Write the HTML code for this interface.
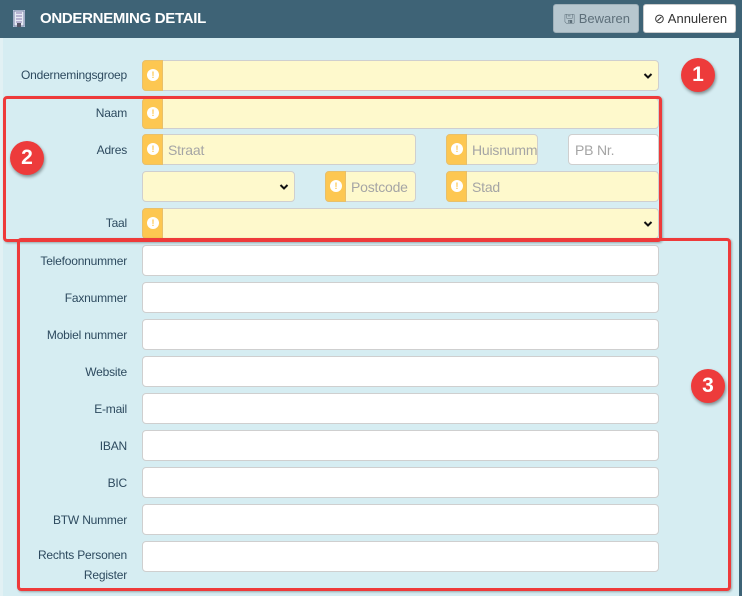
<!DOCTYPE html>
<html><head><meta charset="utf-8"><style>
*{box-sizing:border-box;margin:0;padding:0}
body{width:742px;height:596px;overflow:hidden;background:#d6edf2;font-family:"Liberation Sans",sans-serif;position:relative}
.hdr{position:absolute;left:0;top:0;width:742px;height:38px;background:#3e6376}
.title{position:absolute;left:40px;top:10px;color:#fff;font-weight:bold;font-size:15px;letter-spacing:-0.3px}
.btn{position:absolute;top:4px;height:29px;border-radius:3px;font-size:13px;line-height:27px;padding-left:10px}
.rs{position:absolute;right:0;top:38px;width:3px;height:558px;background:#3e6376}
.ls{position:absolute;left:0;top:38px;width:3px;height:558px;background:#e2f1f4}
.lbl{position:absolute;right:615px;font-size:12px;color:#2d4a5f;text-align:right;line-height:15px;letter-spacing:-0.2px}
.in{position:absolute;height:31px;border:1px solid #cfcfcf;border-radius:4px;background:#fff}
.y{background:#fef9cc}
.ic{position:absolute;height:31px;width:21px;background:#fdc751;border-radius:4px 0 0 4px;border:1px solid #e8c06a}
.ic::after{content:"!";position:absolute;left:4px;top:8px;width:12px;height:12px;border-radius:50%;background:#fff;color:#fdc751;font-size:9px;font-weight:bold;text-align:center;line-height:12px}
.ph{position:absolute;font-size:14px;color:#a5a5a5;top:7px;left:6px;letter-spacing:-0.2px}
.chev{position:absolute;right:5px;top:11px}
.box{position:absolute;border:3px solid #ee3a3a;border-radius:4px;box-shadow:1px 1px 2px rgba(0,0,0,.3)}
.badge{position:absolute;width:34px;height:34px;border-radius:50%;background:#ed3b3b;color:#fff;font-weight:bold;font-size:21px;text-align:center;line-height:34px;box-shadow:1px 2px 3px rgba(0,0,0,.4)}
</style></head><body>
<div class="hdr"></div>
<svg style="position:absolute;left:13px;top:10px" width="12" height="17"><rect x="0" y="0" width="12" height="17" fill="#c9d6e8"/><rect x="1" y="1" width="10" height="15" fill="#e6eaf5" stroke="#7a86a8"/><path d="M3 3h6M3 6h6M3 9h6M3 12h6" stroke="#8a7fb0"/><rect x="4" y="13" width="4" height="4" fill="#556"/></svg>
<div class="title">ONDERNEMING DETAIL</div>
<div class="btn" style="left:553px;width:86px;background:#b7c7cf;border:1px solid #9fb0b9;color:#5d6f7a">🖫 Bewaren</div>
<div class="btn" style="left:643px;width:93px;background:#fff;border:1px solid #ccc;color:#333">⊘ Annuleren</div>
<div class="ls"></div><div class="rs"></div>

<div class="lbl" style="top:68px">Ondernemingsgroep</div>
<div class="in y" style="left:142px;top:60px;width:517px"><svg class="chev" width="10" height="8"><path d="M1.5 2l3.5 3.5 3.5-3.5" fill="none" stroke="#111" stroke-width="2"/></svg></div><div class="ic" style="left:142px;top:60px"></div>

<div class="lbl" style="top:106px">Naam</div>
<div class="in y" style="left:142px;top:98px;width:517px"></div><div class="ic" style="left:142px;top:98px"></div>

<div class="lbl" style="top:143px">Adres</div>
<div class="in y" style="left:142px;top:134px;width:274px"><span class="ph" style="left:25px">Straat</span></div><div class="ic" style="left:142px;top:134px"></div>
<div class="in y" style="left:446px;top:134px;width:92px;overflow:hidden"><span class="ph" style="left:25px;white-space:nowrap">Huisnummer</span></div><div class="ic" style="left:446px;top:134px"></div>
<div class="in" style="left:568px;top:134px;width:91px"><span class="ph">PB Nr.</span></div>

<div class="in y" style="left:142px;top:171px;width:153px"><svg class="chev" width="10" height="8"><path d="M1.5 2l3.5 3.5 3.5-3.5" fill="none" stroke="#111" stroke-width="2"/></svg></div>
<div class="in y" style="left:325px;top:171px;width:91px"><span class="ph" style="left:25px">Postcode</span></div><div class="ic" style="left:325px;top:171px"></div>
<div class="in y" style="left:446px;top:171px;width:213px"><span class="ph" style="left:25px">Stad</span></div><div class="ic" style="left:446px;top:171px"></div>

<div class="lbl" style="top:216px">Taal</div>
<div class="in y" style="left:142px;top:208px;width:517px"><svg class="chev" width="10" height="8"><path d="M1.5 2l3.5 3.5 3.5-3.5" fill="none" stroke="#111" stroke-width="2"/></svg></div><div class="ic" style="left:142px;top:208px"></div>

<div class="lbl" style="top:254px">Telefoonnummer</div><div class="in" style="left:142px;top:245px;width:517px"></div>
<div class="lbl" style="top:291px">Faxnummer</div><div class="in" style="left:142px;top:282px;width:517px"></div>
<div class="lbl" style="top:328px">Mobiel nummer</div><div class="in" style="left:142px;top:319px;width:517px"></div>
<div class="lbl" style="top:365px">Website</div><div class="in" style="left:142px;top:356px;width:517px"></div>
<div class="lbl" style="top:402px">E-mail</div><div class="in" style="left:142px;top:393px;width:517px"></div>
<div class="lbl" style="top:439px">IBAN</div><div class="in" style="left:142px;top:430px;width:517px"></div>
<div class="lbl" style="top:476px">BIC</div><div class="in" style="left:142px;top:467px;width:517px"></div>
<div class="lbl" style="top:513px">BTW Nummer</div><div class="in" style="left:142px;top:504px;width:517px"></div>
<div class="lbl" style="top:545px;line-height:20px">Rechts Personen<br>Register</div><div class="in" style="left:142px;top:541px;width:517px"></div>

<div class="box" style="left:3px;top:96px;width:659px;height:146px"></div>
<div class="box" style="left:17px;top:238px;width:714px;height:353px"></div>
<div class="badge" style="left:681px;top:58px">1</div>
<div class="badge" style="left:10px;top:141px">2</div>
<div class="badge" style="left:691px;top:369px">3</div>
</body></html>
